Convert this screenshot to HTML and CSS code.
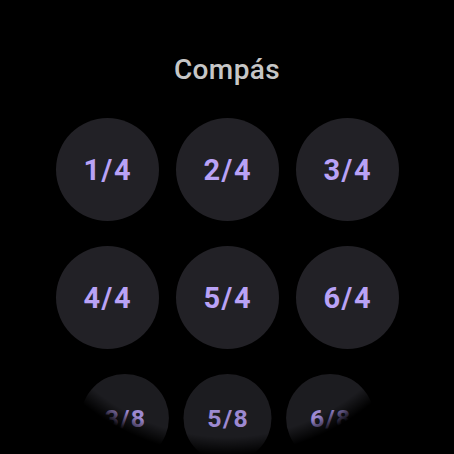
FILE: index.html
```html
<!DOCTYPE html>
<html>
<head>
<meta charset="utf-8">
<link rel="stylesheet" href="styles.css">
</head>
<body>
<div class="screen">
  <h1 class="title">Compás</h1>
  <div class="grid">
    <div class="row">
      <div class="chip">1/4</div>
      <div class="chip">2/4</div>
      <div class="chip">3/4</div>
    </div>
    <div class="row">
      <div class="chip">4/4</div>
      <div class="chip">5/4</div>
      <div class="chip">6/4</div>
    </div>
    <div class="row row-far">
      <div class="chip">3/8</div>
      <div class="chip">5/8</div>
      <div class="chip">6/8</div>
    </div>
  </div>
  <div class="mask"></div>
</div>
</body>
</html>
```
FILE: styles.css
```css
html, body {
  margin: 0;
  padding: 0;
  background: #000;
}
.screen {
  position: relative;
  width: 454px;
  height: 454px;
  overflow: hidden;
  background: #000;
  display: flex;
  flex-direction: column;
  align-items: center;
  font-family: Roboto, "Noto Sans", sans-serif;
}
.title {
  margin: 54px 0 0 0;
  height: 32px;
  line-height: 32px;
  font-size: 28px;
  font-weight: 500;
  color: #c6c6c6;
  letter-spacing: 0.4px;
}
.grid {
  margin-top: 32px;
  display: flex;
  flex-direction: column;
  gap: 25px;
}
.row {
  display: flex;
  gap: 17px;
}
.chip {
  width: 103px;
  height: 103px;
  border-radius: 50%;
  background: #222126;
  color: #b9a2f6;
  display: flex;
  align-items: center;
  justify-content: center;
  font-size: 29px;
  font-weight: 700;
  letter-spacing: 1.6px;
  text-indent: 1.6px;
}
.row-far {
  transform: scale(0.855);
  transform-origin: 50% 0;
  opacity: 0.85;
}
.mask {
  position: absolute;
  inset: 0;
  background: radial-gradient(circle at 227px 227px, rgba(0,0,0,0) 210px, #000 228px);
  pointer-events: none;
}
```
